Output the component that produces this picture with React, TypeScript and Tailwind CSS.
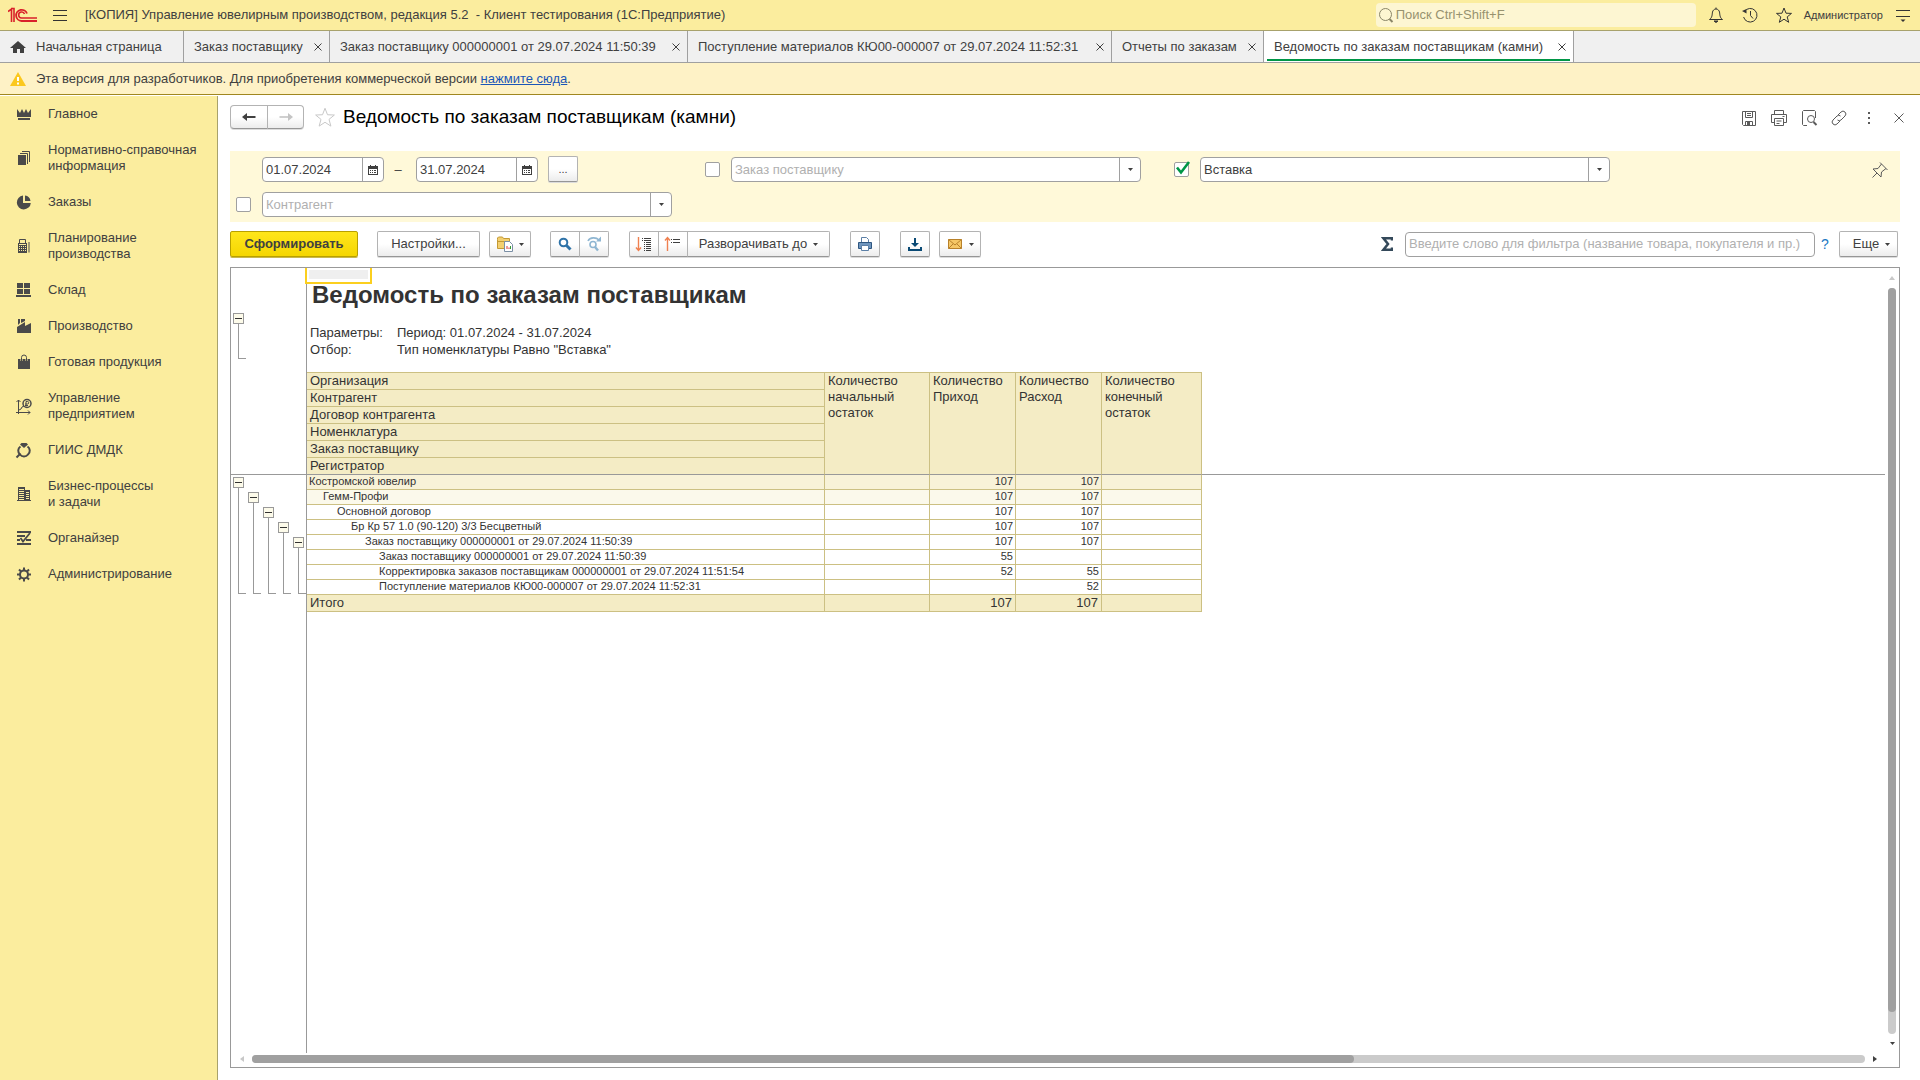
import { useState } from "react";
import type { ReactNode } from "react";
import clsx from "clsx";

const BUTTON =
  "flex items-center justify-center border border-[#b3b3b3] border-b-[#969696] bg-linear-to-b from-white from-50% to-[#ececec] text-[#404040] shadow-[0_1px_0_#dcdcdc]";

const TABS = [
  { title: "Заказ поставщику", width: "w-[146px]" },
  { title: "Заказ поставщику 000000001 от 29.07.2024 11:50:39", width: "w-[358px]" },
  { title: "Поступление материалов КЮ00-000007 от 29.07.2024 11:52:31", width: "w-[424px]" },
  { title: "Отчеты по заказам", width: "w-[152px]" },
  { title: "Ведомость по заказам поставщикам (камни)", width: "w-[310px]" },
];

const SECTIONS: { lines: string[]; icon: ReactNode }[] = [
  {
    lines: ["Главное"],
    icon: <path d="M1 3l3 4 2-4 2 4 2-4 2 4 3-4v8H1zM2 12h12v2H2z" />,
  },
  {
    lines: ["Нормативно-справочная", "информация"],
    icon: (
      <>
        <path d="M2 5h8v10H2z" />
        <path d="M4 3.500h7.500V14M6 1.500h7.500V12" fill="none" stroke="currentColor" />
      </>
    ),
  },
  {
    lines: ["Заказы"],
    icon: <path d="M7 1.500V9h7.800A7 7 0 1 1 7 1.500zM9 1.500A6.500 6.500 0 0 1 14.500 7H9z" />,
  },
  {
    lines: ["Планирование", "производства"],
    icon: (
      <>
        <path d="M3.500 5.500v-4h6v4" fill="none" stroke="currentColor" />
        <path d="M2 5h9v10H2zM12.500 4h1v10.500h-1z" />
        <path
          d="M3 8.500h7M3 10.500h7M3 12.500h7"
          stroke="#fbed9e"
          strokeDasharray="1 1"
          fill="none"
        />
        <path d="M3 6.500h7" stroke="#fbed9e" />
      </>
    ),
  },
  {
    lines: ["Склад"],
    icon: <path d="M1 1h6v5H1zM8 1h6v5H8zM1 7h6v5H1zM8 7h6v5H8zM0 13h15v2H0z" />,
  },
  {
    lines: ["Производство"],
    icon: <path d="M2 1h2v4l-2 2zM5 1h4v2L5 5zM1 9l8-5v4l6-3v10H1z" />,
  },
  {
    lines: ["Готовая продукция"],
    icon: (
      <>
        <path d="M2 5h12v10H2z" />
        <path d="M5.500 7V3.500a2.500 2.500 0 0 1 5 0V7" fill="none" stroke="#fbed9e" strokeWidth="2" />
        <path d="M5.500 7V3.500a2.500 2.500 0 0 1 5 0V7" fill="none" stroke="currentColor" />
      </>
    ),
  },
  {
    lines: ["Управление", "предприятием"],
    icon: (
      <>
        <path
          d="M2.500 16V2M.5 4l2-2 2 2M0 14.500h14M12 12.500l2 2-2 2M3 12l2-1 1-2 2-1"
          fill="none"
          stroke="currentColor"
        />
        <circle cx="11" cy="5.500" r="4" fill="none" stroke="currentColor" strokeWidth="1.500" />
        <path d="M10 8.500v-5h1.500a1.200 1.200 0 0 1 0 2.500H9M9 7.500h3" fill="none" stroke="currentColor" />
      </>
    ),
  },
  {
    lines: ["ГИИС ДМДК"],
    icon: (
      <>
        <path d="M5.500 1h5l1.500 1.500L8 6 4 2.500z" />
        <path
          d="M4.500 4.500A5 5 0 0 0 4 12.500c2 2.500 6 2.500 8 0a5 5 0 0 0-.500-8"
          fill="none"
          stroke="currentColor"
          strokeWidth="2"
        />
        <path d="M.500 15.500l4-4" stroke="currentColor" strokeWidth="2" />
      </>
    ),
  },
  {
    lines: ["Бизнес-процессы", "и задачи"],
    icon: (
      <path
        fillRule="evenodd"
        d="M2 1h7v3h5v11H2zM3 3v1h5V3zm0 2v1h5V5zm0 2v1h5V7zm0 2v1h5V9zm0 2v1h5v-1zm0 2v1h5v-1zM10 6v1h3V6zm0 2v1h3V8zm0 2v1h3v-1zm0 2v1h3v-1zM1 14h1v1H1zM14 14h1v1h-1z"
      />
    ),
  },
  {
    lines: ["Органайзер"],
    icon: (
      <>
        <path d="M1 1h14v2H1zM1 5h8v2H1zM1 9h3v2H1zM10 9h5v2h-5zM1 13h14v2H1z" />
        <path d="M4.500 8l2.500 3.500L14 3" fill="none" stroke="currentColor" strokeWidth="1.800" />
      </>
    ),
  },
  {
    lines: ["Администрирование"],
    icon: (
      <>
        <circle cx="8" cy="8.500" r="4" fill="none" stroke="currentColor" strokeWidth="2" />
        <path
          d="M8 1.500v3M8 12.500v3M1 8.500h3M12 8.500h3M3 3.500l2 2M11 11.500l2 2M13 3.500l-2 2M5 11.500l-2 2"
          stroke="currentColor"
          strokeWidth="2"
        />
      </>
    ),
  },
];

const GROUP_HEADERS = [
  "Организация",
  "Контрагент",
  "Договор контрагента",
  "Номенклатура",
  "Заказ поставщику",
  "Регистратор",
];

const QUANTITY_HEADERS = [
  ["Количество", "начальный", "остаток"],
  ["Количество", "Приход"],
  ["Количество", "Расход"],
  ["Количество", "конечный", "остаток"],
];

const ROWS = [
  { name: "Костромской ювелир", income: "107", outcome: "107", pad: "pl-[2px]", bg: "bg-[#f8f2d8]" },
  { name: "Гемм-Профи", income: "107", outcome: "107", pad: "pl-[16px]", bg: "bg-[#fbf9eb]" },
  { name: "Основной договор", income: "107", outcome: "107", pad: "pl-[30px]", bg: "" },
  { name: "Бр Кр 57 1.0 (90-120) 3/3 Бесцветный", income: "107", outcome: "107", pad: "pl-[44px]", bg: "" },
  {
    name: "Заказ поставщику 000000001 от 29.07.2024 11:50:39",
    income: "107",
    outcome: "107",
    pad: "pl-[58px]",
    bg: "",
  },
  {
    name: "Заказ поставщику 000000001 от 29.07.2024 11:50:39",
    income: "55",
    outcome: "",
    pad: "pl-[72px]",
    bg: "",
  },
  {
    name: "Корректировка заказов поставщикам 000000001 от 29.07.2024 11:51:54",
    income: "52",
    outcome: "55",
    pad: "pl-[72px]",
    bg: "",
  },
  {
    name: "Поступление материалов КЮ00-000007 от 29.07.2024 11:52:31",
    income: "",
    outcome: "52",
    pad: "pl-[72px]",
    bg: "",
  },
];

const TREE_OFFSETS = ["pt-0", "pt-[15px]", "pt-[30px]", "pt-[45px]", "pt-[60px]"];

function Icon({ children, className }: { children: ReactNode; className?: string }) {
  return (
    <svg
      viewBox="0 0 16 16"
      className={clsx("size-4 shrink-0 overflow-visible", className)}
      fill="none"
      stroke="currentColor"
      aria-hidden="true"
    >
      {children}
    </svg>
  );
}

function Caret() {
  return (
    <svg viewBox="0 0 5 3" className="h-[3px] w-[5px] shrink-0" fill="#404040" aria-hidden="true">
      <path d="M0 0h5L2.500 3z" />
    </svg>
  );
}

function Cross() {
  return (
    <svg viewBox="0 0 8 8" className="size-2 overflow-visible" stroke="#404040" aria-hidden="true">
      <path d="M.5.5l7 7M7.500.5l-7 7" />
    </svg>
  );
}

function StarPath() {
  return <path d="M8 1l2 5.200 5.500.2-4.300 3.500 1.500 5.400L8 12.200l-4.700 3.100 1.500-5.400L.5 6.400 6 6.200z" />;
}

function TitleBar() {
  return (
    <header className="flex h-[31px] items-center border-b border-[#a8a26c] bg-[#fbed9e] pr-[9px] pl-2">
      <svg viewBox="0 0 30 16" className="h-4 w-[30px]" fill="none" stroke="#d9202a" aria-label="1С">
        <path d="M0 4.500L3.500 2v13M3 1.500h3V15" strokeWidth="1.600" />
        <path d="M19 6.500A5.600 5.600 0 1 0 13.500 14H29" strokeWidth="1.800" />
        <path d="M16.500 7A3 3 0 1 0 13.500 11H29" strokeWidth="1.600" />
      </svg>
      <button type="button" aria-label="Меню" className="ml-[15px] flex w-3.5 flex-col gap-1">
        <span className="h-px bg-[#333]" />
        <span className="h-px bg-[#333]" />
        <span className="h-px bg-[#333]" />
      </button>
      <h1 className="ml-[18px] flex-1 whitespace-pre">
        {"[КОПИЯ] Управление ювелирным производством, редакция 5.2  - Клиент тестирования (1С:Предприятие)"}
      </h1>
      <label className="mr-3 flex h-6 w-[320px] items-center rounded-sm bg-[#fdf6d2] pl-0.5 text-[#8a8668]">
        <Icon>
          <circle cx="7.500" cy="7.500" r="6" />
          <path d="M11.500 12l3 3" strokeWidth="2" />
        </Icon>
        <input
          type="search"
          aria-label="Поиск"
          placeholder="Поиск Ctrl+Shift+F"
          className="ml-0.5 min-w-0 flex-1 bg-transparent outline-none placeholder:text-[#97926f]"
        />
      </label>
      <div className="flex items-center gap-[18px] text-[#333]">
        <button type="button" aria-label="Уведомления">
          <Icon>
            <path d="M1.500 12.500h13c-3-2-2.500-5-3-7.500-.4-1.500-1.500-3-3.500-3S4.900 3.500 4.500 5c-.5 2.500 0 5.500-3 7.500zM8 .5V2" />
            <path d="M6 14h4l-2 1.500z" fill="currentColor" />
          </Icon>
        </button>
        <button type="button" aria-label="История">
          <Icon>
            <path d="M2.500 4.500A6.800 6.800 0 1 1 1.600 10M8.500 4v4.500l2.500 3" />
            <path d="M0 4l4.500 2.500V2z" fill="currentColor" stroke="none" />
          </Icon>
        </button>
        <button type="button" aria-label="Избранное">
          <Icon>
            <StarPath />
          </Icon>
        </button>
      </div>
      <a href="#user" className="ml-3 text-[11px]">
        Администратор
      </a>
      <button type="button" aria-label="Сервис" className="ml-3">
        <Icon>
          <path d="M1 3.500h14M1 9.500h14" stroke="#333" />
          <path d="M5.500 12.500h5L8 15z" fill="#333" stroke="none" />
        </Icon>
      </button>
    </header>
  );
}

function TabBar({ active, onSelect }: { active: number; onSelect: (i: number) => void }) {
  return (
    <nav className="flex h-8 border-b border-[#a0a0a0] bg-[#f0f0f0]">
      <button type="button" className="flex w-[184px] items-center border-r border-[#a0a0a0] pl-2.5">
        <svg viewBox="0 0 16 14" className="h-3.5 w-4" fill="#404040" aria-hidden="true">
          <path d="M8 1l8 7h-2v5h-4V9H7v4H3V8H0z" />
        </svg>
        <span className="ml-2.5">Начальная страница</span>
      </button>
      {TABS.map((tab, i) => (
        <div
          key={tab.title}
          className={clsx(
            "relative flex items-center justify-between border-r border-[#a0a0a0] pr-[7px] pl-2.5",
            tab.width,
            i === active && "bg-white",
          )}
        >
          <button type="button" onClick={() => onSelect(i)} className="whitespace-nowrap">
            {tab.title}
          </button>
          <button type="button" aria-label="Закрыть">
            <Cross />
          </button>
          {i === active && <span className="absolute inset-x-[3px] bottom-px h-0.5 bg-[#009646]" />}
        </div>
      ))}
    </nav>
  );
}

function Sidebar() {
  return (
    <aside className="w-[218px] shrink-0 border-r border-[#a8a26c] bg-[#fbed9e] pt-2.5 pl-4">
      <ul className="flex flex-col gap-5">
        {SECTIONS.map((section) => (
          <li key={section.lines[0]}>
            <a href="#section" className="flex items-center gap-4 leading-4">
              <svg
                viewBox="0 0 16 16"
                className="size-4 shrink-0 overflow-visible text-[#4a4a4a]"
                fill="currentColor"
                aria-hidden="true"
              >
                {section.icon}
              </svg>
              <span>
                {section.lines.map((line) => (
                  <span key={line} className="block">
                    {line}
                  </span>
                ))}
              </span>
            </a>
          </li>
        ))}
      </ul>
    </aside>
  );
}

function ReportHeader() {
  return (
    <div className="flex items-start pt-[9px]">
      <button type="button" aria-label="Назад" className={clsx(BUTTON, "h-6 w-[38px] rounded-l-sm")}>
        <Icon>
          <path d="M4 8h10.500" strokeWidth="2" />
          <path d="M1 8l5-4v8z" fill="currentColor" stroke="none" />
        </Icon>
      </button>
      <button
        type="button"
        aria-label="Вперед"
        className={clsx(BUTTON, "-ml-px h-6 w-[37px] rounded-r-sm")}
      >
        <Icon className="text-[#c4c4c4]">
          <path d="M1.500 8H12" strokeWidth="1.600" />
          <path d="M15 8l-5-4v8z" fill="currentColor" stroke="none" />
        </Icon>
      </button>
      <button type="button" aria-label="В избранное" className="mt-0.5 ml-[11px] text-[#c8c8c8]">
        <svg viewBox="0 0 16 16" className="size-5" fill="none" stroke="currentColor" strokeWidth="0.8">
          <StarPath />
        </svg>
      </button>
      <h2 className="ml-2 flex-1 text-[19px] leading-6 text-black">
        Ведомость по заказам поставщикам (камни)
      </h2>
      <div className="mt-[5px] -mr-[7px] flex items-center gap-[14px] text-[#5a5a5a]">
        <button type="button" aria-label="Сохранить">
          <Icon>
            <path d="M1.500 1.500h13v14h-12l-1-1zM4.500 1.500v6h7v-6M6 3.500h4M6 5.500h4M4.500 15.500v-4h7v4" />
            <path d="M6 12h3v3H6z" fill="currentColor" stroke="none" />
          </Icon>
        </button>
        <button type="button" aria-label="Печать">
          <Icon>
            <path d="M3.500 4.500v-4h9v4M3.500 12.500h-3v-8h15v8h-3M3.500 8.500h9v7h-9zM5.500 11h5M5.500 13.500h3M11.500 6.500h2" />
          </Icon>
        </button>
        <button type="button" aria-label="Просмотр">
          <Icon>
            <path d="M6 15.500H2.500l-1-1V1.500l1-1h11l1 1V8" />
            <circle cx="10" cy="9" r="3.500" />
            <path d="M12.500 12l3 3" strokeWidth="2" />
          </Icon>
        </button>
        <button type="button" aria-label="Ссылка">
          <Icon>
            <path d="M7 5l3-3a2.600 2.600 0 0 1 4 4l-4 4a2.600 2.600 0 0 1-3.500 0M9 11l-3 3a2.600 2.600 0 0 1-4-4l4-4a2.600 2.600 0 0 1 3.500 0" />
          </Icon>
        </button>
        <button type="button" aria-label="Еще">
          <Icon>
            <path d="M7 2h2v2H7zM7 7h2v2H7zM7 12h2v2H7z" fill="currentColor" stroke="none" />
          </Icon>
        </button>
        <button type="button" aria-label="Закрыть">
          <Icon>
            <path d="M3.500 3.500l9 9M12.500 3.500l-9 9" />
          </Icon>
        </button>
      </div>
    </div>
  );
}

function FieldBox({ children, className }: { children: ReactNode; className?: string }) {
  return (
    <div className={clsx("flex h-[25px] rounded-sm border border-[#a0a0a0] bg-white", className)}>{children}</div>
  );
}

function DateField({ label, value }: { label: string; value: string }) {
  const [date, setDate] = useState(value);
  return (
    <FieldBox className="w-[122px]">
      <input
        type="text"
        aria-label={label}
        value={date}
        onChange={(e) => setDate(e.target.value)}
        className="min-w-0 flex-1 bg-transparent pl-[3px] outline-none"
      />
      <button
        type="button"
        aria-label="Календарь"
        className="flex w-[21px] items-center justify-center border-l border-[#a0a0a0]"
      >
        <svg viewBox="0 0 10 10" className="size-2.5" fill="#404040" aria-hidden="true">
          <path fillRule="evenodd" d="M0 1h2V0h1v1h4V0h1v1h2v9H0zM1 4v5h8V4z" />
          <path d="M2 5h1v1H2zM4 5h1v1H4zM6 5h2v1H6zM2 7h1v1H2zM4 7h1v1H4zM6 7h2v1H6z" />
        </svg>
      </button>
    </FieldBox>
  );
}

function FilterField({ label, value, checked }: { label: string; value?: string; checked?: boolean }) {
  const [enabled, setEnabled] = useState(Boolean(checked));
  const [text, setText] = useState(value ?? "");
  return (
    <div className="flex items-center gap-[11px]">
      <span className="relative flex">
        <input
          type="checkbox"
          aria-label={`Отбор: ${label}`}
          checked={enabled}
          onChange={(e) => setEnabled(e.target.checked)}
          className="size-[15px] appearance-none rounded-xs border border-[#a0a0a0] bg-white"
        />
        {enabled && (
          <svg
            viewBox="0 0 15 15"
            className="pointer-events-none absolute inset-0 size-[15px] overflow-visible"
            fill="none"
            stroke="#009646"
            strokeWidth="2.600"
            aria-hidden="true"
          >
            <path d="M3 5.500l4 5L15 0" />
          </svg>
        )}
      </span>
      <FieldBox className="flex-1">
        <input
          type="text"
          aria-label={label}
          placeholder={label}
          value={text}
          onChange={(e) => setText(e.target.value)}
          className="min-w-0 flex-1 bg-transparent pl-[3px] outline-none placeholder:text-[#b0b0b0]"
        />
        <button
          type="button"
          aria-label="Выбрать"
          className="flex w-[21px] items-center justify-center border-l border-[#a0a0a0]"
        >
          <Caret />
        </button>
      </FieldBox>
    </div>
  );
}

function Filters() {
  return (
    <section className="mt-[22px] flex justify-between bg-[#fff9d9] pt-[5px] pr-3 pb-[5px] pl-1.5">
      <div className="grid grid-cols-[436px_436px_436px] items-end gap-x-[33px] gap-y-2.5">
        <div className="flex items-end pl-[26px]">
          <DateField label="Начало периода" value="01.07.2024" />
          <span className="w-8 pr-1 text-center leading-[25px]">–</span>
          <DateField label="Конец периода" value="31.07.2024" />
          <button type="button" className={clsx(BUTTON, "ml-2.5 h-[26px] w-[30px] rounded-xs text-[11px]")}>
            ...
          </button>
        </div>
        <FilterField label="Заказ поставщику" />
        <FilterField label="Вставка" value="Вставка" checked />
        <FilterField label="Контрагент" />
      </div>
      <button type="button" aria-label="Закрепить" className="mt-1.5 self-start text-[#5a5a5a]">
        <Icon>
          <path d="M8 .5l7.500 7.500M9.500 2L6 6.500 1 7l8 8 .5-5L14 6.500M5 11l-4.500 4.500" />
        </Icon>
      </button>
    </section>
  );
}

function Toolbar() {
  return (
    <div className="mt-[9px] flex items-center">
      <button
        type="button"
        className="h-[26px] w-32 rounded-xs border border-[#b8a000] bg-linear-to-b from-[#ffe61a] to-[#f5d600] font-bold text-[#404040] shadow-[0_1px_0_#c9b84d]"
      >
        Сформировать
      </button>
      <button type="button" className={clsx(BUTTON, "ml-[19px] h-[26px] w-[103px] rounded-xs")}>
        Настройки...
      </button>
      <button
        type="button"
        aria-label="Варианты отчета"
        className={clsx(BUTTON, "ml-[9px] h-[26px] w-[42px] gap-1.5 rounded-xs")}
      >
        <Icon>
          <path d="M.5 3.500V2l1-1h4l1 1.500h6v10H.5z" fill="#f4d070" stroke="#c49a35" />
          <path d="M.5 5.500h12" stroke="#c49a35" />
          <path d="M7.500 5.500h5l3 3v7h-8z" fill="#fff" stroke="#7b8fa5" />
          <path d="M10 13v-3M12 13v-1.500" stroke="#d33" />
          <path d="M13.500 13v-3" stroke="#393" />
        </Icon>
        <Caret />
      </button>
      <button
        type="button"
        aria-label="Найти"
        className={clsx(BUTTON, "ml-[19px] h-[26px] w-[30px] rounded-l-xs")}
      >
        <Icon className="text-[#2f73a8]">
          <circle cx="6.500" cy="6.500" r="3.800" strokeWidth="2" />
          <path d="M9.500 9.500l4 4" strokeWidth="3" />
        </Icon>
      </button>
      <button
        type="button"
        aria-label="Найти далее"
        className={clsx(BUTTON, "-ml-px h-[26px] w-[30px] rounded-r-xs")}
      >
        <Icon className="text-[#8fb6d2]">
          <circle cx="7" cy="8.500" r="3" strokeWidth="1.600" />
          <path d="M9 11l3 3.500" strokeWidth="2.400" />
          <path d="M2 5c2-4 8-4 11-1" strokeWidth="1.600" />
          <path d="M10 5.500h5v-5z" fill="currentColor" stroke="none" />
        </Icon>
      </button>
      <button
        type="button"
        aria-label="Развернуть"
        className={clsx(BUTTON, "ml-5 h-[26px] w-[30px] rounded-l-xs")}
      >
        <Icon>
          <path d="M2.500 1v13M0 11.500l2.500 3 2.500-3" stroke="#f08050" strokeWidth="1.400" />
          <path d="M6 2.500h1M8 2.500h7M6 4.500h1M8 4.500h7M8 6.500h1M10 6.500h5M8 8.500h1M10 8.500h5M8 10.500h1M10 10.500h5M8 12.500h1M10 12.500h5M8 14.500h1M10 14.500h5" />
        </Icon>
      </button>
      <button type="button" aria-label="Свернуть" className={clsx(BUTTON, "-ml-px h-[26px] w-[30px]")}>
        <Icon>
          <path d="M2.500 15V2M0 4.500l2.500-3 2.500 3" stroke="#f08050" strokeWidth="1.400" />
          <path d="M6 3.500h1M8 3.500h7M6 6.500h1M8 6.500h7" />
        </Icon>
      </button>
      <button type="button" className={clsx(BUTTON, "-ml-px h-[26px] w-[143px] gap-1.5 rounded-r-xs")}>
        Разворачивать до
        <Caret />
      </button>
      <button type="button" aria-label="Печать" className={clsx(BUTTON, "ml-5 h-[26px] w-[30px] rounded-xs")}>
        <Icon>
          <path d="M4.500 6V1.500h5l2 2V6" fill="#fff" stroke="#5b7fa6" />
          <path d="M1.500 6.500h13v6h-13z" fill="#6f95bd" stroke="#2e5680" />
          <path d="M4.500 9.500h7v5h-7z" fill="#fff" stroke="#5b7fa6" />
        </Icon>
      </button>
      <button
        type="button"
        aria-label="Сохранить в файл"
        className={clsx(BUTTON, "ml-5 h-[26px] w-[30px] rounded-xs")}
      >
        <Icon className="text-[#0a4a75]">
          <path d="M8 2v7M2 11v3h12v-3" strokeWidth="2" />
          <path d="M4 7h8l-4 4z" fill="currentColor" stroke="none" />
        </Icon>
      </button>
      <button
        type="button"
        aria-label="Отправить"
        className={clsx(BUTTON, "ml-[9px] h-[26px] w-[42px] gap-1.5 rounded-xs")}
      >
        <Icon>
          <path d="M1.500 3.500h13v9h-13z" fill="#f5c766" stroke="#b8812a" />
          <path d="M1.500 3.500L8 9l6.500-5.500M1.500 12.500L6 8M14.500 12.500L10 8" stroke="#b8812a" />
        </Icon>
        <Caret />
      </button>
      <svg
        viewBox="0 0 12 14"
        className="ml-auto h-3.5 w-3"
        fill="none"
        stroke="#34495a"
        strokeWidth="2.500"
        aria-label="Сумма"
      >
        <path d="M11 3.500V1.300H2.500L7 7l-4.500 5.700H11v-2.200" />
      </svg>
      <FieldBox className="ml-3 w-[410px]">
        <input
          type="text"
          aria-label="Фильтр"
          placeholder="Введите слово для фильтра (название товара, покупателя и пр.)"
          className="min-w-0 flex-1 bg-transparent pl-[3px] outline-none placeholder:text-[#b0b0b0]"
        />
      </FieldBox>
      <button type="button" className="w-6 pr-1 text-[14px] text-[#1a78c2]">
        ?
      </button>
      <button type="button" className={clsx(BUTTON, "mr-0.5 h-[26px] w-[59px] gap-1.5 rounded-xs pl-1.5")}>
        Еще
        <Caret />
      </button>
    </div>
  );
}

function TreeBranch({ className, lineClass }: { className?: string; lineClass?: string }) {
  return (
    <div className={clsx("flex w-[15px] shrink-0 flex-col", className)}>
      <button
        type="button"
        aria-label="Свернуть группу"
        className="flex size-[11px] shrink-0 items-center justify-center border border-[#999] bg-[#fdfbea]"
      >
        <span className="h-px w-[7px] bg-[#333]" />
      </button>
      <span className={clsx("ml-[5px] w-2 border-b border-l border-[#999]", lineClass)} />
    </div>
  );
}

function ReportTable() {
  return (
    <table className="w-full table-fixed border-separate border-spacing-0 text-left">
      <colgroup>
        <col className="w-[518px]" />
        <col className="w-[105px]" />
        <col className="w-[86px]" />
        <col className="w-[86px]" />
        <col className="w-[100px]" />
        <col />
      </colgroup>
      <thead>
        {GROUP_HEADERS.map((name, i) => {
          const last = i === GROUP_HEADERS.length - 1;
          return (
            <tr key={name}>
              <th
                className={clsx(
                  "h-[17px] border-r border-b border-r-[#ccc083] bg-[#f4ecc5] p-0 pl-[3px] leading-4 font-normal",
                  i === 0 && "border-t border-t-[#ccc083]",
                  last ? "border-b-[#999]" : "border-b-[#ccc083]",
                )}
              >
                {name}
              </th>
              {i === 0 &&
                QUANTITY_HEADERS.map((lines) => (
                  <th
                    key={lines.join(" ")}
                    rowSpan={6}
                    className="border-t border-r border-b border-t-[#ccc083] border-r-[#ccc083] border-b-[#999] bg-[#f4ecc5] p-0 pl-[3px] align-top leading-4 font-normal"
                  >
                    {lines.map((line) => (
                      <span key={line} className="block">
                        {line}
                      </span>
                    ))}
                  </th>
                ))}
              {i === 0 && <td rowSpan={6} className="border-b border-[#999] p-0" />}
            </tr>
          );
        })}
      </thead>
      <tbody className="text-[11px] leading-3">
        {ROWS.map((row, i) => {
          const cell = clsx("h-[15px] border-r border-b border-[#ccc083] p-0 align-top", row.bg);
          return (
            <tr key={i}>
              <td className={clsx(cell, row.pad)}>{row.name}</td>
              <td className={cell} />
              <td className={clsx(cell, "pr-0.5 text-right")}>{row.income}</td>
              <td className={clsx(cell, "pr-0.5 text-right")}>{row.outcome}</td>
              <td className={cell} />
            </tr>
          );
        })}
      </tbody>
      <tfoot className="leading-4">
        <tr>
          <td className="h-[17px] border-r border-b border-[#ccc083] bg-[#f4ecc5] p-0 pl-[3px]">Итого</td>
          <td className="border-r border-b border-[#ccc083] bg-[#f4ecc5] p-0" />
          <td className="border-r border-b border-[#ccc083] bg-[#f4ecc5] p-0 pr-[3px] text-right">107</td>
          <td className="border-r border-b border-[#ccc083] bg-[#f4ecc5] p-0 pr-[3px] text-right">107</td>
          <td className="border-r border-b border-[#ccc083] bg-[#f4ecc5] p-0" />
        </tr>
      </tfoot>
    </table>
  );
}

function Sheet() {
  return (
    <section className="mt-2.5 flex flex-1 flex-col border border-[#999] text-[#333]">
      <div className="flex flex-1">
        <div className="flex w-[76px] shrink-0 flex-col border-r border-[#999]">
          <div className="h-[207px] border-b border-[#999] pt-[45px] pl-0.5">
            <TreeBranch lineClass="h-[35px]" />
          </div>
          <div className="flex h-[119px] pt-[2px] pl-0.5">
            {TREE_OFFSETS.map((offset) => (
              <TreeBranch key={offset} className={offset} lineClass="flex-1" />
            ))}
          </div>
        </div>
        <div className="relative flex-1">
          {/* selected cell frame */}
          <div className="absolute top-0 -left-0.5 h-4 w-[67px] border-2 border-t-0 border-[#fbcf1f] p-0.5">
            <div className="h-[9px] bg-[#efefef]" />
          </div>
          <div className="h-[104px] pt-[13px]">
            <h3 className="pl-[5px] text-[24px] leading-7 font-bold">Ведомость по заказам поставщикам</h3>
            <dl className="mt-[15px] grid grid-cols-[87px_1fr] pl-[3px] leading-[17px]">
              <dt>Параметры:</dt>
              <dd>Период: 01.07.2024 - 31.07.2024</dd>
              <dt>Отбор:</dt>
              <dd>Тип номенклатуры Равно "Вставка"</dd>
            </dl>
          </div>
          <ReportTable />
        </div>
        <div className="flex w-3.5 shrink-0 flex-col items-center">
          <svg viewBox="0 0 6 4" className="mt-2 h-1 w-1.5" fill="#c8c8c8" aria-hidden="true">
            <path d="M0 4h6L3 0z" />
          </svg>
          <div className="mt-2 w-2 flex-1 rounded-full bg-[#cbcbcb]">
            <div className="h-[97%] rounded-full bg-[#a0a0a0]" />
          </div>
          <span className="mt-2 mb-2">
            <Caret />
          </span>
        </div>
      </div>
      <div className="flex h-3.5 items-center pr-[22px] pb-0.5 pl-[9px]">
        <svg viewBox="0 0 4 6" className="h-1.5 w-1" fill="#c8c8c8" aria-hidden="true">
          <path d="M4 0v6L0 3z" />
        </svg>
        <div className="ml-2 h-2 flex-1 rounded-full bg-[#cbcbcb]">
          <div className="h-2 w-[68.3%] rounded-full bg-[#a0a0a0]" />
        </div>
        <svg viewBox="0 0 4 6" className="ml-2 h-1.5 w-1" fill="#404040" aria-hidden="true">
          <path d="M0 0v6l4-3z" />
        </svg>
      </div>
    </section>
  );
}

export default function App() {
  const [activeTab, setActiveTab] = useState(4);
  return (
    <div className="flex min-h-screen flex-col bg-white font-['Liberation_Sans',Arial,sans-serif] text-[13px] leading-4 text-[#404040]">
      <TitleBar />
      <TabBar active={activeTab} onSelect={setActiveTab} />
      <div className="mb-px flex h-8 items-center border-b border-[#a08720] bg-[#fef2c6] pl-2.5">
        <svg viewBox="0 0 16 14" className="h-3.5 w-4" aria-hidden="true">
          <path d="M8 0l8 14H0z" fill="#fbc81e" />
          <path d="M7 5h2v4H7zM7 10.500h2v2H7z" fill="#fff" />
        </svg>
        <p className="ml-2.5">
          Эта версия для разработчиков. Для приобретения коммерческой версии{" "}
          <a href="#buy" className="text-[#1a56b8] underline">
            нажмите сюда
          </a>
          .
        </p>
      </div>
      <div className="flex flex-1">
        <Sidebar />
        <main className="flex min-w-0 flex-1 flex-col pr-5 pb-3 pl-3">
          <ReportHeader />
          <Filters />
          <Toolbar />
          <Sheet />
        </main>
      </div>
    </div>
  );
}
